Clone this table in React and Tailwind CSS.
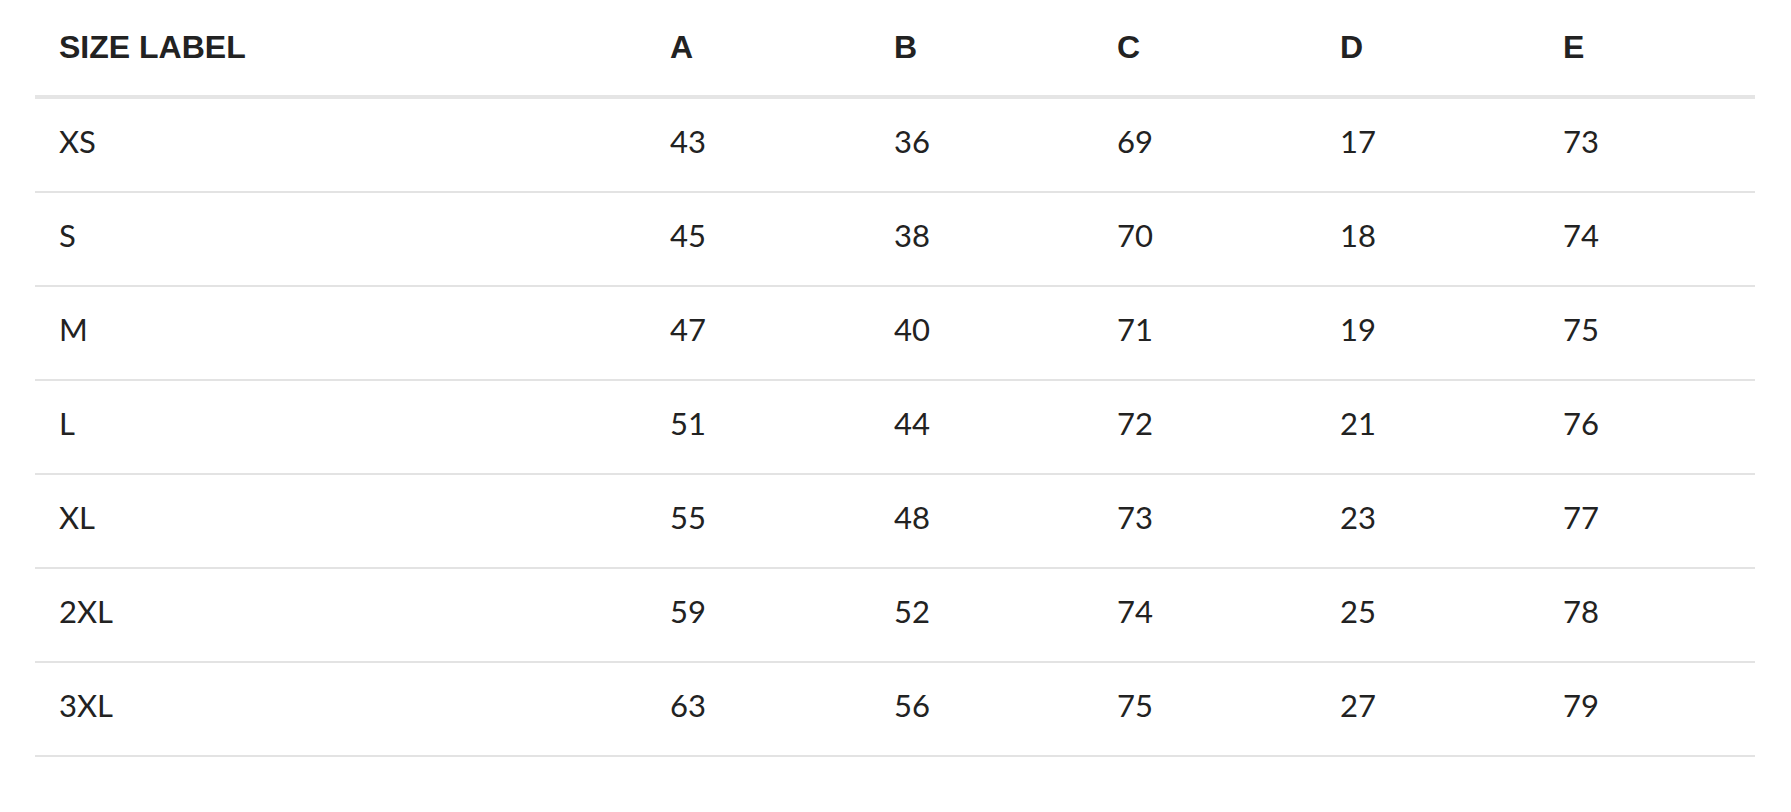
import React from "react";

const rows = [
  ["XS", 43, 36, 69, 17, 73],
  ["S", 45, 38, 70, 18, 74],
  ["M", 47, 40, 71, 19, 75],
  ["L", 51, 44, 72, 21, 76],
  ["XL", 55, 48, 73, 23, 77],
  ["2XL", 59, 52, 74, 25, 78],
  ["3XL", 63, 56, 75, 27, 79],
];

const headers = ["SIZE LABEL", "A", "B", "C", "D", "E"];

const cols = "grid grid-cols-[611px_224px_223px_223px_223px_1fr]";

export default function App() {
  return (
    <div className="min-h-[812px] w-full bg-white pl-[35px] pr-[36px]">
      <div className={`${cols} h-[99px] border-b-4 border-[#e5e5e5] items-center pb-[2px]`}>
        {headers.map((h) => (
          <div
            key={h}
            className="pl-6 text-[32px] font-bold leading-none text-[#222222] font-['Liberation_Sans',Arial,sans-serif]"
          >
            {h}
          </div>
        ))}
      </div>
      {rows.map((r) => (
        <div key={r[0]} className={`${cols} h-[94px] border-b-2 border-[#e3e3e3] items-center pb-[7px]`}>
          {r.map((c, i) => (
            <div
              key={i}
              className="pl-6 text-[31px] leading-none text-[#222222] font-['Lato','Open_Sans',sans-serif]"
            >
              {c}
            </div>
          ))}
        </div>
      ))}
    </div>
  );
}
